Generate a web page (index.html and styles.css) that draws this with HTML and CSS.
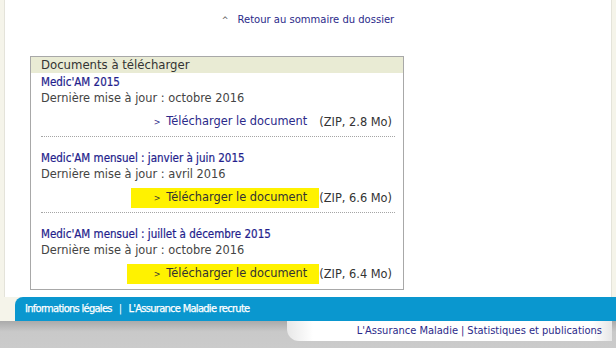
FILE: index.html
```html
<!DOCTYPE html>
<html lang="fr">
<head>
<meta charset="utf-8">
<link rel="stylesheet" href="styles.css">
</head>
<body>
<div class="page">
  <div class="content">
    <p class="back"><a href="#"><span class="caret">^</span>Retour au sommaire du dossier</a></p>
    <div class="box">
      <div class="box-head">Documents à télécharger</div>
      <div class="item">
        <a class="title" href="#">Medic'AM 2015</a>
        <div class="date">Dernière mise à jour : octobre 2016</div>
        <div class="dl"><a href="#" class="dl-link"><span class="gt">&gt;</span>Télécharger le document</a><span class="size">(ZIP, 2.8 Mo)</span></div>
      </div>
      <div class="item">
        <a class="title" href="#">Medic'AM mensuel : janvier à juin 2015</a>
        <div class="date">Dernière mise à jour : avril 2016</div>
        <div class="dl"><a href="#" class="dl-link hl hl-a"><span class="gt">&gt;</span>Télécharger le document</a><span class="size">(ZIP, 6.6 Mo)</span></div>
      </div>
      <div class="item last">
        <a class="title" href="#">Medic'AM mensuel : juillet à décembre 2015</a>
        <div class="date">Dernière mise à jour : octobre 2016</div>
        <div class="dl"><a href="#" class="dl-link hl hl-b"><span class="gt">&gt;</span>Télécharger le document</a><span class="size">(ZIP, 6.4 Mo)</span></div>
      </div>
    </div>
  </div>
  <div class="footer">
    <div class="footer-bar"><a href="#">Informations légales</a><span class="sep">|</span><a href="#">L'Assurance Maladie recrute</a></div>
    <div class="footer-sub">
      <div class="tab"><a href="#">L'Assurance Maladie</a><span class="sep2">|</span><a href="#">Statistiques et publications</a></div>
    </div>
  </div>
</div>
</body>
</html>
```

FILE: styles.css
```css
html, body { margin: 0; padding: 0; }
body {
  width: 616px;
  height: 348px;
  overflow: hidden;
  background: #f5f4ea;
  font-family: "DejaVu Sans", Verdana, sans-serif;
}
a { text-decoration: none; }
.page { display: flex; flex-direction: column; height: 348px; }
.content {
  background: #fff;
  margin: 0 4px 0 4px;
  border-left: 1px solid #e4e3da;
  border-right: 1px solid #e4e3da;
  padding: 8px 0 7px 25px;
  flex: 0 0 auto;
}
.back {
  margin: 0 0 0 -25px;
  text-align: center;
  font-size: 10px;
  line-height: 14px;
  height: 48px;
  padding-top: 5px;
  box-sizing: border-box;
}
.back a { color: #2b2a8a; }
.caret { color: #555; font-size: 8px; margin-right: 9px; }
.box {
  width: 372px;
  border: 1px solid #a8a8a8;
  background: #fff;
  padding-bottom: 6px;
}
.box-head {
  background: #e9ebd4;
  height: 16px;
  line-height: 16px;
  padding-left: 10px;
  font-family: "DejaVu Sans Condensed", "DejaVu Sans", sans-serif;
  font-size: 13px;
  color: #333;
}
.item {
  margin: 0 8px 0 10px;
  padding-top: 1px;
  border-bottom: 1px dotted #a5a5a5;
  padding-bottom: 5px;
  margin-bottom: 12px;
}
.item.last { border-bottom: none; margin-bottom: 0; padding-bottom: 0; }
.title {
  display: block;
  font-family: "DejaVu Sans Condensed", "DejaVu Sans", sans-serif;
  font-size: 11.5px;
  line-height: 16px;
  color: #231d8c;
  -webkit-text-stroke: 0.2px #231d8c;
}
.date {
  font-size: 11.4px;
  line-height: 16px;
  color: #444;
}
.dl {
  display: flex;
  justify-content: flex-end;
  align-items: center;
  margin-top: 6px;
  height: 19px;
  font-size: 11.4px;
  padding-right: 3px;
}
.dl-link { color: #2b2a8a; padding-right: 12px; line-height: 19px; }
.gt { font-size: 8px; margin-right: 6px; }
.hl { background: #fff200; color: #333; }
.hl-a { padding-left: 23px; }
.hl-b { padding-left: 27px; }
.size { color: #333; }
.footer { flex: 1 1 auto; display: flex; flex-direction: column; }
.footer-bar {
  margin-left: 15px;
  background: #0a97cf;
  border-top-left-radius: 8px;
  height: 24px;
  line-height: 24px;
  padding-left: 10px;
  font-family: "DejaVu Sans Condensed", "DejaVu Sans", sans-serif;
  font-size: 11px;
  letter-spacing: -0.7px;
  color: #fff;
  -webkit-text-stroke: 0.25px #fff;
}
.footer-bar a { color: #fff; }
.sep { margin: 0 7px; -webkit-text-stroke: 0; }
.footer-sub {
  flex: 1 1 auto;
  background: linear-gradient(#aaa, #c9c9c9 40%, #cbcbcb);
  display: flex;
  justify-content: flex-end;
  align-items: flex-start;
}
.tab {
  width: 315px;
  margin-right: 4px;
  height: 20px;
  line-height: 20px;
  text-align: right;
  padding-right: 10px;
  background: linear-gradient(to right, #e8e8e8, #fff 8%, #fff 94%, #e6e6e6);
  border-bottom-left-radius: 12px;
  font-family: "DejaVu Sans Condensed", "DejaVu Sans", sans-serif;
  font-size: 11px;
}
.tab a { color: #2b2a8a; }
.sep2 { margin: 0 3px; color: #2b2a8a; }
```
